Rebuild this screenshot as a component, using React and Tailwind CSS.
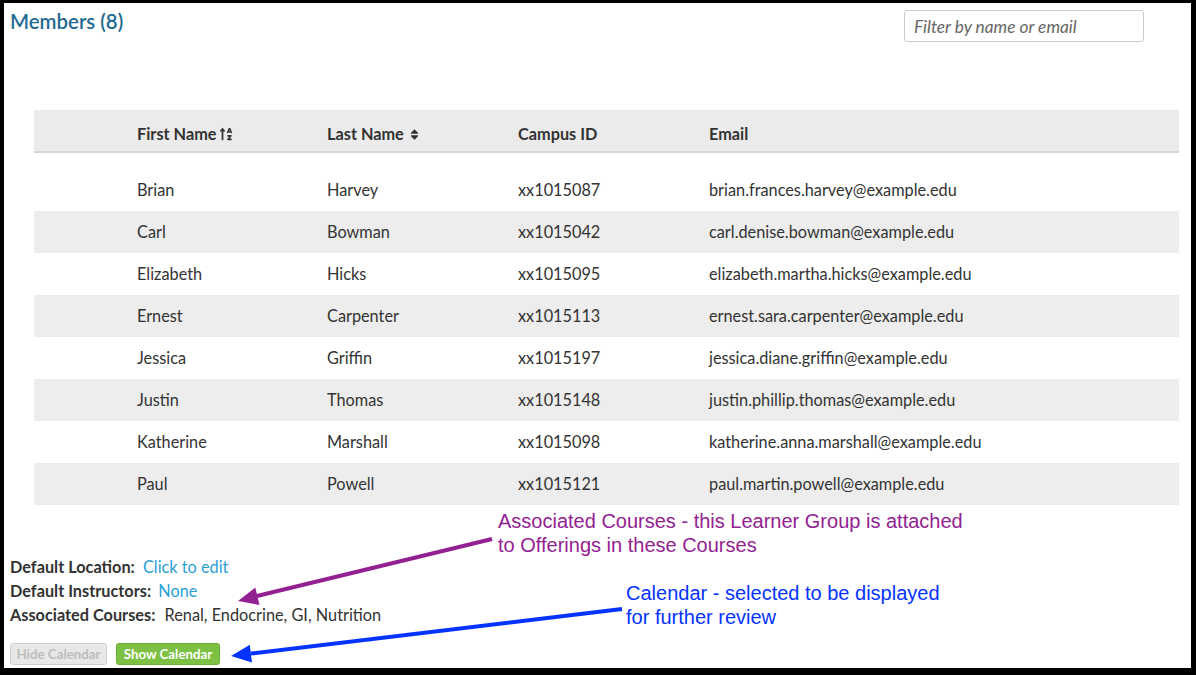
import React from "react";
import { FaSortAlphaUp, FaSort } from "react-icons/fa";

const rows = [
  ["Brian", "Harvey", "xx1015087", "brian.frances.harvey@example.edu"],
  ["Carl", "Bowman", "xx1015042", "carl.denise.bowman@example.edu"],
  ["Elizabeth", "Hicks", "xx1015095", "elizabeth.martha.hicks@example.edu"],
  ["Ernest", "Carpenter", "xx1015113", "ernest.sara.carpenter@example.edu"],
  ["Jessica", "Griffin", "xx1015197", "jessica.diane.griffin@example.edu"],
  ["Justin", "Thomas", "xx1015148", "justin.phillip.thomas@example.edu"],
  ["Katherine", "Marshall", "xx1015098", "katherine.anna.marshall@example.edu"],
  ["Paul", "Powell", "xx1015121", "paul.martin.powell@example.edu"],
];

const cols = "grid grid-cols-[103px_190px_191px_191px_1fr]";

export default function App() {
  return (
    <div className="relative w-[1196px] h-[675px] bg-white font-['Lato',sans-serif] text-[#333] text-[16.3px]">
      <div className="w-full h-full border-black border-t-[3px] border-l-4 border-r-[5px] border-b-[7px] flex flex-col">
        <div className="flex justify-between items-start">
          <h2 className="pl-[6px] mt-[4px] text-[20.4px] leading-[28px] font-semibold text-[#1f6a91]">Members (8)</h2>
          <input
            className="mt-[7px] mr-[47px] w-[240px] h-[32px] border border-[#cccccc] rounded-[3px] px-[9px] text-[17.3px] italic placeholder:text-[#666] outline-none"
            placeholder="Filter by name or email"
          />
        </div>
        <div className="ml-[30px] mr-[12px] mt-[68px]">
          <div className={`${cols} h-[43px] pt-[7px] items-center bg-[#ebebeb] border-b-[2px] border-[#d6d6d6] font-bold`}>
            <div />
            <div className="flex items-center gap-[3px]">First Name <FaSortAlphaUp className="text-[14px]" /></div>
            <div className="flex items-center gap-[4px]">Last Name <FaSort className="text-[13px]" /></div>
            <div>Campus ID</div>
            <div>Email</div>
          </div>
          <div className="mt-[16px]">
            {rows.map((r, i) => (
              <div key={i} className={`${cols} h-[42px] items-center ${i % 2 === 1 ? "bg-[#ededed]" : ""}`}>
                <div />
                <div>{r[0]}</div>
                <div>{r[1]}</div>
                <div>{r[2]}</div>
                <div>{r[3]}</div>
              </div>
            ))}
          </div>
        </div>
        <div className="pl-[6px] mt-[50px] leading-[24px]">
          <div><span className="font-bold">Default Location:</span> <span className="text-[#2a9fd6] ml-[4px]">Click to edit</span></div>
          <div><span className="font-bold">Default Instructors:</span> <span className="text-[#2a9fd6] ml-[3px]">None</span></div>
          <div><span className="font-bold">Associated Courses:</span> <span className="ml-[5px]">Renal, Endocrine, GI, Nutrition</span></div>
          <div className="flex gap-[9px] mt-[16px]">
            <button className="w-[97px] h-[22px] text-[13.3px] leading-[18px] font-bold text-[#bdbdbd] bg-[#e8e8e8] border border-[#cfcfcf] rounded-[3px]">Hide Calendar</button>
            <button className="w-[104px] h-[22px] text-[13.3px] leading-[18px] font-bold text-white bg-[#7cc143] border border-[#6cae37] rounded-[3px]">Show Calendar</button>
          </div>
        </div>
      </div>

      <div className="absolute left-[498px] top-[509px] font-['Liberation_Sans',Arial,sans-serif] text-[20px] leading-[24px] text-[#942192]">
        <div>Associated Courses - this Learner Group is attached</div>
        <div>to Offerings in these Courses</div>
      </div>
      <div className="absolute left-[626px] top-[581px] font-['Liberation_Sans',Arial,sans-serif] text-[20px] leading-[24px] text-[#0433ff]">
        <div>Calendar - selected to be displayed</div>
        <div>for further review</div>
      </div>
      <svg className="absolute left-0 top-0 pointer-events-none" width="1196" height="675" viewBox="0 0 1196 675">
        <line x1="492" y1="539" x2="257" y2="596" stroke="#942192" strokeWidth="4" />
        <polygon points="238,601 259.5,605 255.3,587.6" fill="#942192" />
        <line x1="622" y1="609" x2="251" y2="653.5" stroke="#0433ff" strokeWidth="4" />
        <polygon points="231,656 252,662.5 249.8,644.7" fill="#0433ff" />
      </svg>
    </div>
  );
}
